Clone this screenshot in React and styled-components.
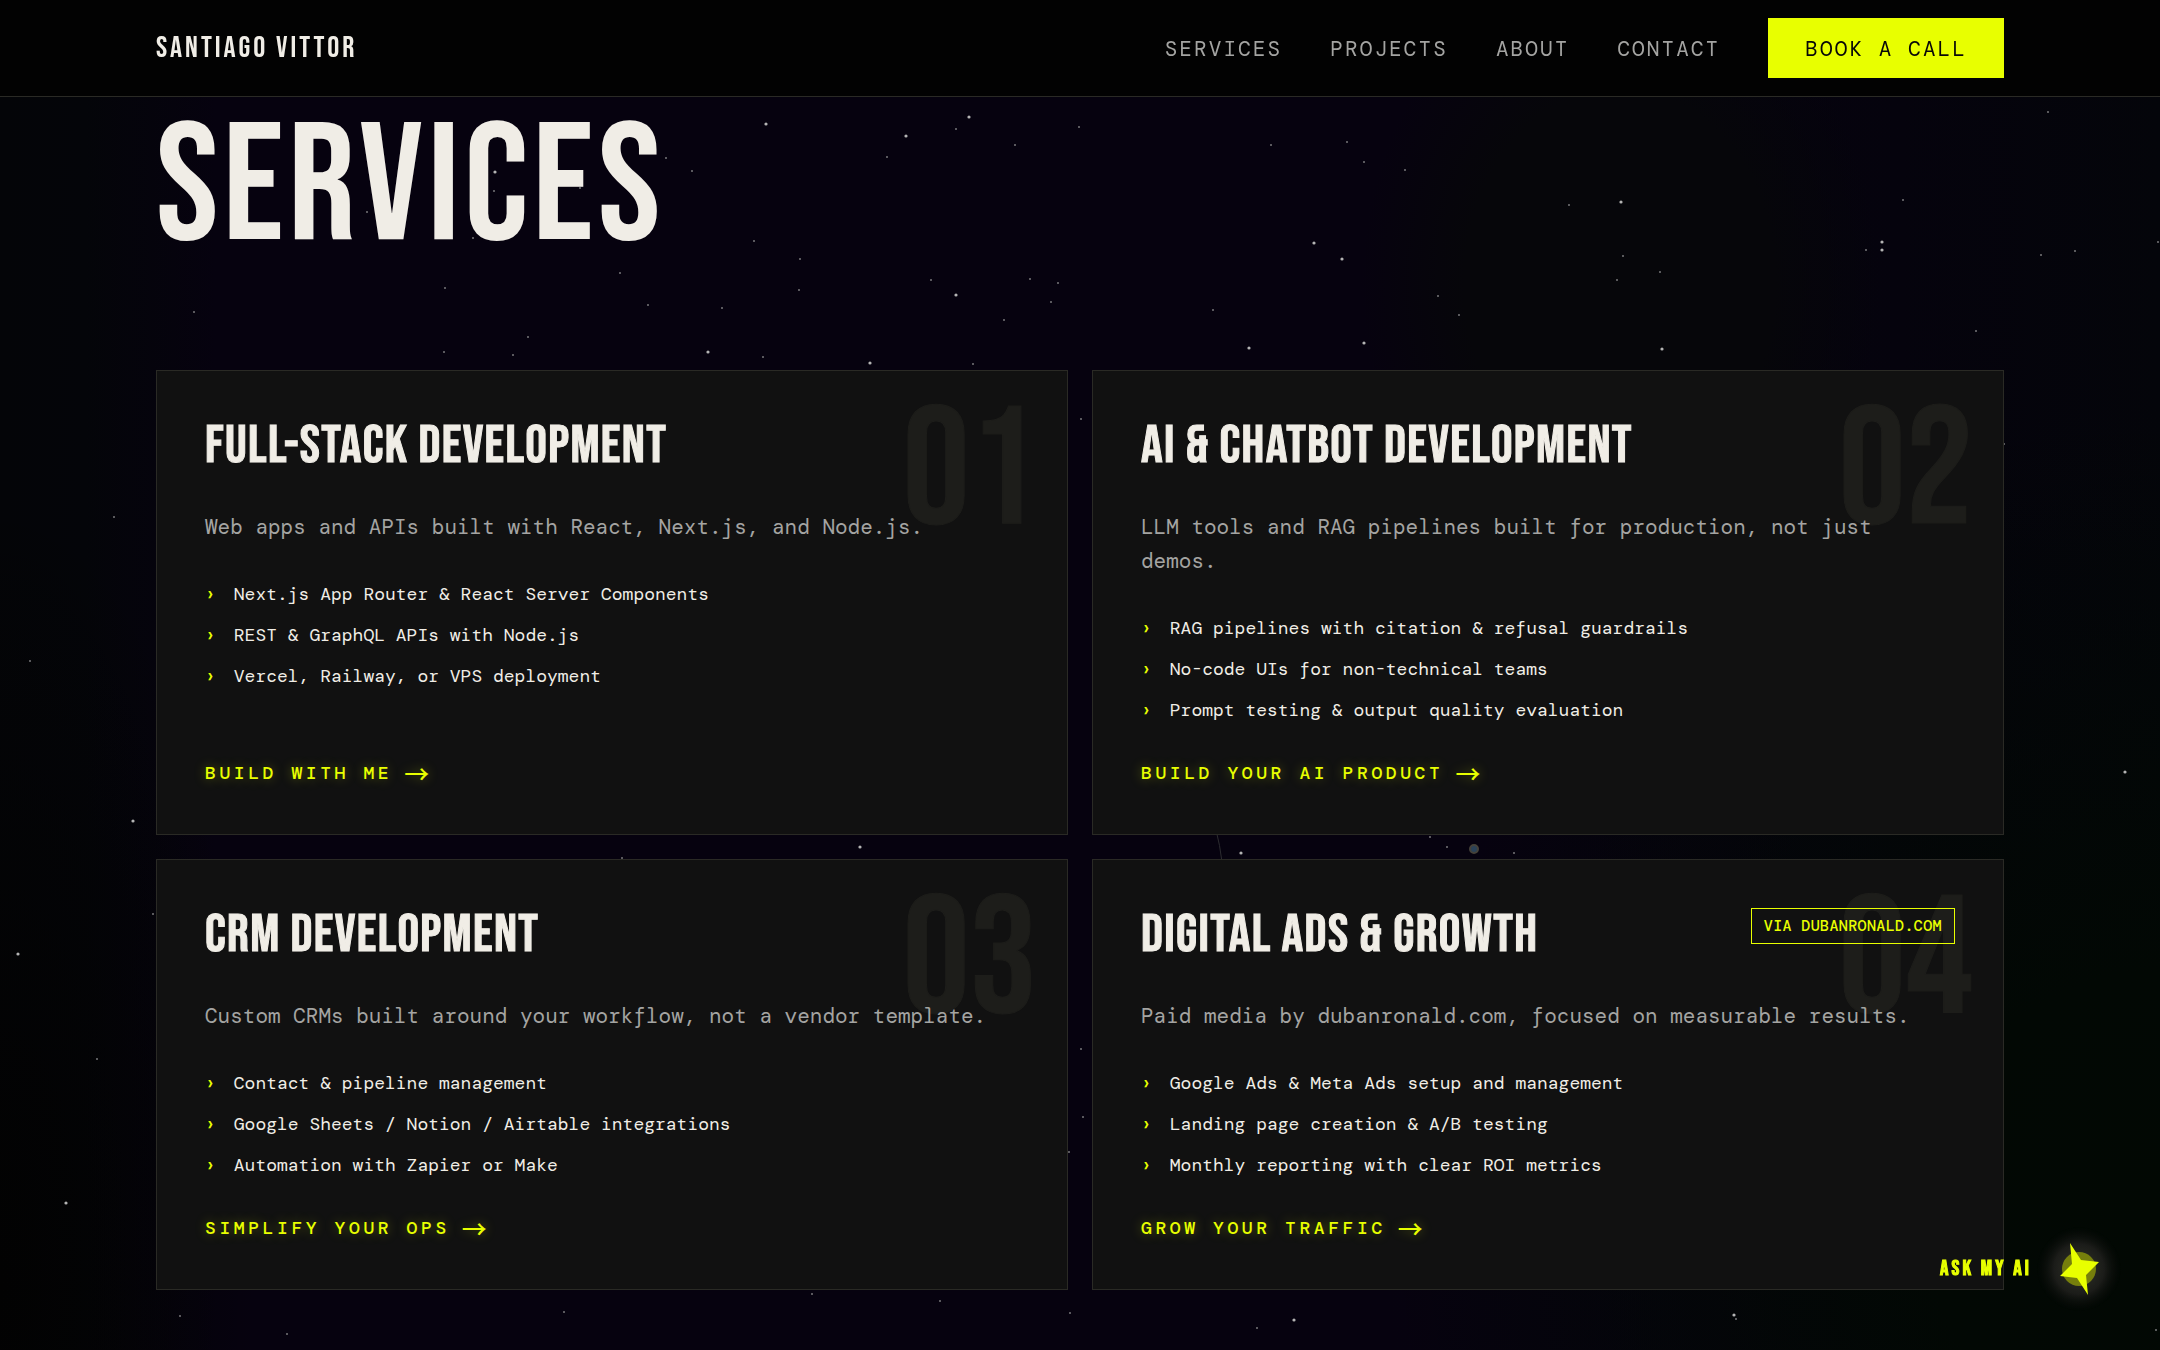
import React from "react";
import styled, { createGlobalStyle, css } from "styled-components";

const LIME = "#e8ff00";
const CREAM = "#f0ede6";
const GREY = "#a4a4a2";
const LINE = "#2a2a25";
const DISPLAY = '"Bebas Neue", "Roboto Condensed", "Liberation Sans", sans-serif';
const MONO = '"DM Mono", "Liberation Mono", monospace';

const GlobalStyle = createGlobalStyle`
  *, *::before, *::after { box-sizing: border-box; }
  html { background: #030305; }
  body {
    margin: 0;
    min-height: 100vh;
    overflow: hidden;
    color: ${CREAM};
    font-family: ${MONO};
  }
`;

const Sky = styled.svg`
  position: fixed;
  inset: 0;
  z-index: -1;
  width: 100%;
  height: 100%;
  background:
    radial-gradient(ellipse 12% 24% at 75% 21%, #06060a 0%, #06060a 60%, rgba(6, 6, 10, 0) 100%),
    radial-gradient(ellipse 36% 60% at 100% 90%, #020803 0%, #020804 30%, rgba(2, 8, 4, 0) 100%),
    radial-gradient(ellipse 12% 60% at 0% 95%, #020202 0%, rgba(2, 2, 2, 0) 100%),
    linear-gradient(90deg, #040508 0%, #040509 4%, #06020f 10%, #06020f 72%, #05030d 88%, #04050a 100%);
`;

const Header = styled.header`
  border-bottom: 1px solid ${LINE};
  background: #020202;
`;

const Container = styled.div`
  width: 100%;
  max-width: 1920px;
  margin: 0 auto;
  padding: 0 36px;
`;

const Bar = styled(Container)`
  display: flex;
  align-items: center;
  justify-content: space-between;
  height: 96px;
`;

const Brand = styled.a`
  color: ${CREAM};
  font: 400 30px/36px ${DISPLAY};
  letter-spacing: 0.1em;
  text-decoration: none;
`;

const Nav = styled.nav`
  display: flex;
  align-items: center;
  gap: 48px;
`;

const navText = css`
  font: 400 21px/32px ${MONO};
  letter-spacing: 0.1em;
  text-transform: uppercase;
`;

const NavLink = styled.a`
  ${navText}
  padding-top: 2px;
  color: ${GREY};
  text-decoration: none;
`;

const BookButton = styled.button`
  ${navText}
  height: 60px;
  padding: 2px 36px 0;
  border: 1px solid ${LIME};
  background: ${LIME};
  color: #080808;
  cursor: pointer;
`;

const Section = styled(Container).attrs({ as: "main" })`
  padding-top: 8px;
`;

const Title = styled.h1`
  margin: 0 0 97px;
  font: 400 168px/168px ${DISPLAY};
  letter-spacing: 0.025em;
`;

const Grid = styled.div`
  display: grid;
  grid-template-columns: repeat(2, minmax(0, 1fr));
  gap: 24px;
`;

const Card = styled.article`
  position: relative;
  display: flex;
  flex-direction: column;
  align-items: flex-start;
  padding: 48px;
  border: 1px solid ${LINE};
  background: #111111;
`;

const Ordinal = styled.span`
  position: absolute;
  top: 30px;
  right: 30px;
  color: #1d1d1a;
  font: 400 168px/144px ${DISPLAY};
  -webkit-text-stroke: 1px currentColor;
`;

const CardHead = styled.div`
  position: relative;
  display: flex;
  align-items: flex-start;
  justify-content: space-between;
  width: 100%;
  margin-bottom: 38px;
`;

const CardTitle = styled.h2`
  margin: 0;
  font: 400 54px/53px ${DISPLAY};
  letter-spacing: 0.025em;
  -webkit-text-stroke: 1px currentColor;
`;

const Badge = styled.a`
  padding: 6px 12px;
  border: 1px solid ${LIME};
  color: ${LIME};
  font: 500 15px/22px ${MONO};
  letter-spacing: 0.025em;
  text-decoration: none;
`;

const Summary = styled.p`
  position: relative;
  margin: 0 0 36px;
  color: ${GREY};
  font-size: 21px;
  line-height: 34px;
`;

const Points = styled.ul`
  display: grid;
  gap: 12px;
  margin: 0 0 36px;
  padding: 0;
  list-style: none;
`;

const Point = styled.li`
  display: flex;
  gap: 18px;
  font-size: 18px;
  line-height: 29px;

  &::before {
    content: "›";
    color: ${LIME};
    font-weight: 500;
  }
`;

const CardLink = styled.a`
  display: flex;
  align-items: center;
  gap: 12px;
  margin-top: auto;
  color: ${LIME};
  font-size: 18px;
  font-weight: 500;
  line-height: 25px;
  letter-spacing: 0.2em;
  text-decoration: none;
  text-shadow: 0 0 12px rgba(232, 255, 0, 0.35);
`;

const Arrow = styled.span`
  font-family: "Noto Sans CJK SC", "Noto Sans", sans-serif;
  font-size: 25px;
  letter-spacing: 0;
`;

const Assistant = styled.button`
  position: fixed;
  right: 36px;
  bottom: 48px;
  display: flex;
  align-items: center;
  gap: 2px;
  padding: 0;
  border: 0;
  background: none;
  color: ${LIME};
  font: 400 21px/24px ${DISPLAY};
  letter-spacing: 0.15em;
  -webkit-text-stroke: 1px currentColor;
  cursor: pointer;
`;

const Spark = styled.svg`
  display: block;
  width: 90px;
  height: 90px;
  margin: -12px 0;
`;

/* x, y and radius of each star, on a 2160 by 1350 field */
const STARS = [
  [766, 124, 2], [906, 136, 2], [969, 117, 2], [956, 129, 1], [887, 157, 1], [1015, 145, 1], [1079, 127, 1],
  [666, 158, 1], [692, 171, 1], [495, 172, 2], [494, 191, 1], [367, 212, 1], [580, 188, 1], [473, 238, 1],
  [754, 241, 1], [800, 259, 1], [620, 273, 1], [445, 288, 1], [194, 312, 1], [648, 305, 1], [528, 337, 1],
  [444, 352, 1], [513, 355, 1], [708, 352, 2], [763, 357, 1], [799, 290, 1], [722, 308, 1], [931, 280, 1],
  [956, 295, 2], [1030, 279, 1], [1058, 283, 1], [1004, 320, 1], [1051, 302, 1], [870, 363, 2], [973, 364, 1],
  [1271, 145, 1], [1347, 142, 1], [1364, 162, 1], [1405, 170, 1], [2048, 112, 1], [1569, 205, 1], [1621, 202, 2],
  [1314, 243, 2], [1342, 259, 2], [1903, 200, 1], [1882, 242, 2], [1882, 250, 2], [1866, 250, 1], [2041, 255, 1],
  [2075, 251, 1], [2158, 242, 1], [1623, 256, 1], [1660, 272, 1], [1617, 280, 1], [1438, 296, 1], [1459, 315, 1],
  [1213, 310, 1], [1976, 331, 1], [1249, 348, 2], [1364, 343, 2], [1662, 349, 2], [114, 517, 1], [30, 661, 1],
  [133, 821, 2], [153, 914, 1], [18, 954, 2], [97, 1059, 1], [66, 1203, 2], [180, 1316, 1], [287, 1334, 1],
  [564, 1312, 1], [812, 1294, 1], [940, 1301, 1], [1070, 1313, 1], [860, 847, 2], [622, 858, 1], [1081, 419, 1],
  [1069, 1152, 1], [1081, 1049, 1], [1083, 1117, 1], [1241, 853, 2], [1430, 837, 1], [1447, 847, 1],
  [1514, 853, 1], [2125, 772, 2], [2004, 444, 1], [2156, 1330, 1], [1294, 1320, 2], [1257, 1328, 1],
  [1734, 1315, 2], [1736, 1319, 1],
];

const SERVICES = [
  {
    title: "Full-Stack Development",
    summary: "Web apps and APIs built with React, Next.js, and Node.js.",
    points: ["Next.js App Router & React Server Components", "REST & GraphQL APIs with Node.js", "Vercel, Railway, or VPS deployment"],
    link: "BUILD WITH ME",
  },
  {
    title: "AI & Chatbot Development",
    summary: "LLM tools and RAG pipelines built for production, not just demos.",
    points: ["RAG pipelines with citation & refusal guardrails", "No-code UIs for non-technical teams", "Prompt testing & output quality evaluation"],
    link: "BUILD YOUR AI PRODUCT",
  },
  {
    title: "CRM Development",
    summary: "Custom CRMs built around your workflow, not a vendor template.",
    points: ["Contact & pipeline management", "Google Sheets / Notion / Airtable integrations", "Automation with Zapier or Make"],
    link: "SIMPLIFY YOUR OPS",
  },
  {
    title: "Digital Ads & Growth",
    badge: "VIA DUBANRONALD.COM",
    summary: "Paid media by dubanronald.com, focused on measurable results.",
    points: ["Google Ads & Meta Ads setup and management", "Landing page creation & A/B testing", "Monthly reporting with clear ROI metrics"],
    link: "GROW YOUR TRAFFIC",
  },
];

function StarField() {
  return (
    <Sky viewBox="0 0 2160 1350" preserveAspectRatio="xMidYMin slice" aria-hidden="true">
      {STARS.map(([x, y, r]) => (
        <circle key={`${x}-${y}`} cx={x} cy={y} r={r === 2 ? 1.6 : 1} fill={r === 2 ? "#b4b4b4" : "#77777a"} />
      ))}
      <path d="M1216 830 Q1220 845 1222 862" fill="none" stroke="#2c2c30" />
      <circle cx="1474" cy="849" r="4" fill="#2a4258" stroke="#45423a" strokeWidth="2" />
    </Sky>
  );
}

function ServiceCard({ service, index }) {
  return (
    <Card>
      <Ordinal aria-hidden="true">{String(index + 1).padStart(2, "0")}</Ordinal>
      <CardHead>
        <CardTitle>{service.title}</CardTitle>
        {service.badge && <Badge href="#partner">{service.badge}</Badge>}
      </CardHead>
      <Summary>{service.summary}</Summary>
      <Points>
        {service.points.map((point) => (
          <Point key={point}>{point}</Point>
        ))}
      </Points>
      <CardLink href="#contact">
        {service.link}
        <Arrow>→</Arrow>
      </CardLink>
    </Card>
  );
}

export default function App() {
  return (
    <>
      <GlobalStyle />
      <StarField />
      <Header>
        <Bar>
          <Brand href="#top">SANTIAGO VITTOR</Brand>
          <Nav aria-label="Main">
            <NavLink href="#services">Services</NavLink>
            <NavLink href="#projects">Projects</NavLink>
            <NavLink href="#about">About</NavLink>
            <NavLink href="#contact">Contact</NavLink>
            <BookButton type="button">Book a call</BookButton>
          </Nav>
        </Bar>
      </Header>
      <Section>
        <Title>SERVICES</Title>
        <Grid>
          {SERVICES.map((service, index) => (
            <ServiceCard key={service.title} service={service} index={index} />
          ))}
        </Grid>
      </Section>
      <Assistant type="button">
        ASK MY AI
        <Spark viewBox="0 0 90 90" aria-hidden="true">
          <defs>
            <radialGradient id="halo">
              <stop offset="0" stopColor="#33342a" />
              <stop offset="0.6" stopColor="#1b1c19" />
              <stop offset="1" stopColor="#0a0c0a" stopOpacity="0" />
            </radialGradient>
          </defs>
          <circle cx="45" cy="45" r="42" fill="url(#halo)" />
          <circle cx="45" cy="45" r="17" fill="#767f0c" />
          <path d="M36 19 L47 36 L65 38 L52 51 L54 71 L43 54 L26 52 L38 40 Z" fill={LIME} />
        </Spark>
      </Assistant>
    </>
  );
}
